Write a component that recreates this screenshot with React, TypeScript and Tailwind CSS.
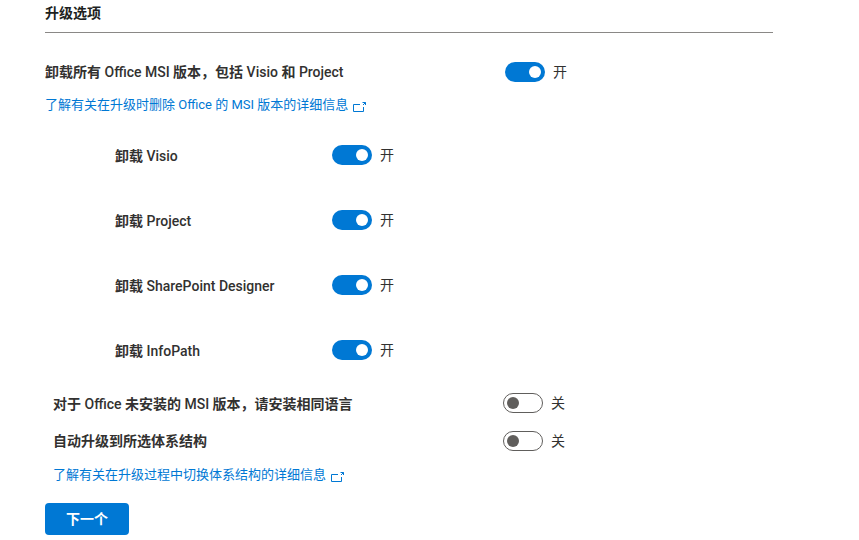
const fontStack = "font-['Roboto','Noto_Sans_CJK_SC',sans-serif]";

function ExternalIcon() {
  return (
    <svg width="13" height="12" viewBox="0 0 13 12" fill="none" stroke="currentColor" strokeWidth="1" className="ml-[5px] mt-[3px] shrink-0">
      <path d="M7 3.5H0.5V10.5H10.5V6" />
      <path d="M9.5 1.5H12.5V4" />
      <path d="M12.5 1.5L10 4" />
    </svg>
  );
}

function Toggle({ on }: { on: boolean }) {
  return (
    <div className="flex items-center gap-2">
      {on ? (
        <div className="flex h-5 w-10 items-center justify-end rounded-full bg-[#0078d4] px-1">
          <div className="h-3 w-3 rounded-full bg-white" />
        </div>
      ) : (
        <div className="flex h-5 w-10 items-center rounded-full border border-[#605e5c] bg-white px-[3px]">
          <div className="h-3 w-3 rounded-full bg-[#605e5c]" />
        </div>
      )}
      <span className="text-sm leading-5 text-[#323130]">{on ? "开" : "关"}</span>
    </div>
  );
}

function SubRow({ name }: { name: string }) {
  return (
    <div className="flex h-5 items-center pl-[70px]">
      <span className="w-[217px] pt-px text-sm font-semibold text-[#323130]">
        卸载 <span className="font-medium">{name}</span>
      </span>
      <Toggle on />
    </div>
  );
}

export default function App() {
  return (
    <main className={`${fontStack} h-[540px] w-[859px] overflow-hidden bg-white pl-[45px]`}>
      <h2 className="h-[33px] w-[728px] border-b border-[#8a8886] pt-[3px] text-sm font-bold leading-5 text-[#201f1e]">
        升级选项
      </h2>

      <div className="mt-[29px] flex h-5 items-center">
        <span className="w-[460px] text-sm font-semibold text-[#323130]">
          卸载所有 <span className="font-medium">Office MSI</span> 版本，包括 <span className="font-medium">Visio</span> 和 <span className="font-medium">Project</span>
        </span>
        <Toggle on />
      </div>
      <a className="mt-[13px] flex h-5 items-center text-[13px] text-[#0078d4]">
        了解有关在升级时删除 Office 的 MSI 版本的详细信息
        <ExternalIcon />
      </a>

      <div className="mt-[30px] flex flex-col gap-[45px]">
        <SubRow name="Visio" />
        <SubRow name="Project" />
        <SubRow name="SharePoint Designer" />
        <SubRow name="InfoPath" />
      </div>

      <div className="mt-[33px] flex h-5 items-center pl-2">
        <span className="w-[450px] pt-px text-sm font-semibold text-[#323130]">
          对于 <span className="font-medium">Office</span> 未安装的 <span className="font-medium">MSI</span> 版本，请安装相同语言
        </span>
        <Toggle on={false} />
      </div>
      <div className="mt-[18px] flex h-5 items-center pl-2">
        <span className="w-[450px] text-sm font-semibold text-[#323130]">自动升级到所选体系结构</span>
        <Toggle on={false} />
      </div>
      <a className="mt-[14px] flex h-5 items-center pl-2 text-[13px] text-[#0078d4]">
        了解有关在升级过程中切换体系结构的详细信息
        <ExternalIcon />
      </a>

      <button className="mt-[18px] block h-8 w-[84px] rounded-sm bg-[#0078d4] text-sm font-semibold text-white">
        下一个
      </button>
    </main>
  );
}
